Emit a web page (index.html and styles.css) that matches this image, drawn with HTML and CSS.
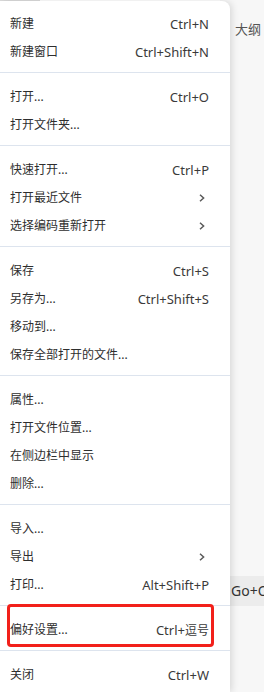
FILE: index.html
```html
<!DOCTYPE html>
<html lang="zh-CN">
<head>
<meta charset="utf-8">
<title>文件菜单</title>
<link rel="stylesheet" href="styles.css">
</head>
<body>
<div class="screen">
  <div class="topline"></div>
  <div class="main">
    <nav class="menu">
      <div class="group">
        <div class="item"><span class="label">新建</span><span class="key">Ctrl+N</span></div>
        <div class="item"><span class="label">新建窗口</span><span class="key">Ctrl+Shift+N</span></div>
      </div>
      <div class="sep"></div>
      <div class="group">
        <div class="item"><span class="label">打开...</span><span class="key">Ctrl+O</span></div>
        <div class="item"><span class="label">打开文件夹...</span></div>
      </div>
      <div class="sep"></div>
      <div class="group">
        <div class="item"><span class="label">快速打开...</span><span class="key">Ctrl+P</span></div>
        <div class="item"><span class="label">打开最近文件</span><svg class="chev" width="6" height="8" viewBox="0 0 6 8"><polyline points="1,0.8 4.6,4 1,7.2"/></svg></div>
        <div class="item"><span class="label">选择编码重新打开</span><svg class="chev" width="6" height="8" viewBox="0 0 6 8"><polyline points="1,0.8 4.6,4 1,7.2"/></svg></div>
      </div>
      <div class="sep"></div>
      <div class="group">
        <div class="item"><span class="label">保存</span><span class="key">Ctrl+S</span></div>
        <div class="item"><span class="label">另存为...</span><span class="key">Ctrl+Shift+S</span></div>
        <div class="item"><span class="label">移动到...</span></div>
        <div class="item"><span class="label">保存全部打开的文件...</span></div>
      </div>
      <div class="sep"></div>
      <div class="group">
        <div class="item"><span class="label">属性...</span></div>
        <div class="item"><span class="label">打开文件位置...</span></div>
        <div class="item"><span class="label">在侧边栏中显示</span></div>
        <div class="item"><span class="label">删除...</span></div>
      </div>
      <div class="sep"></div>
      <div class="group">
        <div class="item"><span class="label">导入...</span></div>
        <div class="item"><span class="label">导出</span><svg class="chev" width="6" height="8" viewBox="0 0 6 8"><polyline points="1,0.8 4.6,4 1,7.2"/></svg></div>
        <div class="item"><span class="label">打印...</span><span class="key">Alt+Shift+P</span></div>
      </div>
      <div class="sep"></div>
      <div class="group">
        <div class="item marked"><span class="label">偏好设置...</span><span class="key">Ctrl+<span class="cjk">逗号</span></span><span class="highlight"></span></div>
      </div>
      <div class="sep"></div>
      <div class="group">
        <div class="item"><span class="label">关闭</span><span class="key">Ctrl+W</span></div>
      </div>
    </nav>
    <aside class="pane">
      <div class="outline">大纲</div>
      <div class="band">Go+O</div>
    </aside>
  </div>
</div>
</body>
</html>
```

FILE: styles.css
```css
html, body {
  margin: 0;
  padding: 0;
  background: #f7f7f7;
  overflow: hidden;
}

.screen {
  width: 264px;
  height: 692px;
  display: flex;
  flex-direction: column;
  font-family: "Noto Sans", "Noto Sans CJK SC", sans-serif;
  color: #2e2e2e;
}

.topline {
  height: 1px;
  flex: none;
  background: linear-gradient(to right, #dcdcdc 0, #dcdcdc 40px, #ffffff 40px, #ffffff 220px, transparent 220px);
}

.main {
  flex: 1;
  display: flex;
  min-height: 0;
}

.menu {
  position: relative;
  z-index: 1;
  width: 230px;
  flex: none;
  background: #fff;
  border-top-right-radius: 8px;
  box-shadow: 2px 0 7px rgba(0, 0, 0, 0.13);
  padding-top: 9px;
  box-sizing: border-box;
}

.group {
  display: flex;
  flex-direction: column;
}

.item {
  height: 28px;
  display: flex;
  align-items: center;
  justify-content: space-between;
  padding: 0 21px 0 10px;
}

.label {
  font-family: "Noto Sans", "Noto Sans CJK SC", sans-serif;
  font-size: 12px;
  line-height: 16px;
  white-space: nowrap;
}

.key {
  font-family: "Noto Sans", "Noto Sans CJK SC", sans-serif;
  font-size: 13px;
  line-height: 16px;
  white-space: nowrap;
  color: #3a3a3a;
}

.key .cjk {
  font-family: "Noto Sans CJK SC", sans-serif;
  font-size: 12px;
}

.chev {
  margin-right: 4px;
  fill: none;
  stroke: #5a5a5a;
  stroke-width: 1.5;
}

.sep {
  height: 1px;
  background: #dde4ee;
  margin: 6px 0 10px;
}

.marked {
  position: relative;
}

.highlight {
  position: absolute;
  top: -12px;
  left: 7px;
  width: 207px;
  height: 43px;
  box-sizing: border-box;
  border: 3px solid #f2201a;
  border-radius: 4px;
}

.pane {
  flex: 1;
  display: flex;
  flex-direction: column;
  min-width: 0;
  overflow: hidden;
}

.outline {
  margin: 19px 0 0 5px;
  font-family: "Noto Sans CJK SC", sans-serif;
  font-size: 13px;
  line-height: 18px;
  color: #555;
  white-space: nowrap;
}

.band {
  margin-top: 538px;
  height: 30px;
  background: #ececec;
  font-family: "Noto Sans", sans-serif;
  font-size: 14px;
  line-height: 30px;
  color: #333;
  padding-left: 1px;
  white-space: nowrap;
}
```
